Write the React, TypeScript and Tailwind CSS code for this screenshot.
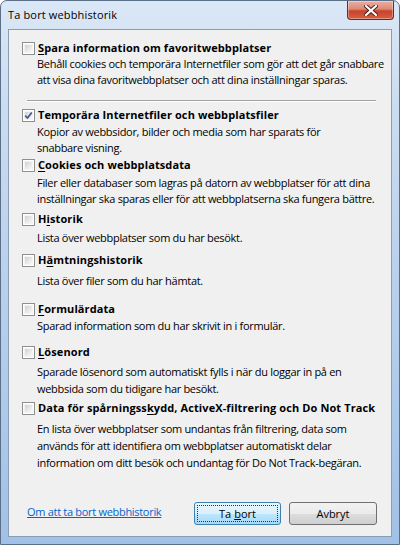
import React from "react";

type Item = {
  label: string;
  ul: number;
  checked?: boolean;
  desc: string[];
  wrap: string;
  descCls: string;
};

const items: Item[] = [
  {
    label: "Spara information om favoritwebbplatser",
    ul: 0,
    desc: [
      "Behåll cookies och temporära Internetfiler som gör att det går snabbare",
      "att visa dina favoritwebbplatser och att dina inställningar sparas.",
    ],
    wrap: "mt-[10px]",
    descCls: "mt-0 leading-[16px]",
  },
  {
    label: "Temporära Internetfiler och webbplatsfiler",
    ul: 3,
    checked: true,
    desc: ["Kopior av webbsidor, bilder och media som har sparats för", "snabbare visning."],
    wrap: "mt-[5px]",
    descCls: "mt-[1px] leading-[16px]",
  },
  {
    label: "Cookies och webbplatsdata",
    ul: 0,
    desc: [
      "Filer eller databaser som lagras på datorn av webbplatser för att dina",
      "inställningar ska sparas eller för att webbplatserna ska fungera bättre.",
    ],
    wrap: "mt-[1px]",
    descCls: "mt-[2px] leading-[16px]",
  },
  {
    label: "Historik",
    ul: 1,
    desc: ["Lista över webbplatser som du har besökt."],
    wrap: "mt-[4px]",
    descCls: "mt-[3px] leading-[16px]",
  },
  {
    label: "Hämtningshistorik",
    ul: 1,
    desc: ["Lista över filer som du har hämtat."],
    wrap: "mt-[6px]",
    descCls: "mt-[5px] leading-[16px]",
  },
  {
    label: "Formulärdata",
    ul: 0,
    desc: ["Sparad information som du har skrivit in i formulär."],
    wrap: "mt-[12px]",
    descCls: "mt-[1px] leading-[16px]",
  },
  {
    label: "Lösenord",
    ul: 0,
    desc: [
      "Sparade lösenord som automatiskt fylls i när du loggar in på en",
      "webbsida som du tidigare har besökt.",
    ],
    wrap: "mt-[10px]",
    descCls: "mt-[3px] leading-[17px]",
  },
  {
    label: "Data för spårningsskydd, ActiveX-filtrering och Do Not Track",
    ul: 19,
    desc: [
      "En lista över webbplatser som undantas från filtrering, data som",
      "används för att identifiera om webbplatser automatiskt delar",
      "information om ditt besök och undantag för Do Not Track-begäran.",
    ],
    wrap: "mt-[3px]",
    descCls: "mt-[4px] leading-[17px]",
  },
];

function Checkbox({ checked }: { checked?: boolean }) {
  return (
    <div className="relative w-[13px] h-[13px] shrink-0 border border-[#8e8f8f] bg-white">
      <div className="absolute inset-[1px] border border-[#f4f4f4] bg-[linear-gradient(135deg,#d2d2d2_0%,#e6e6e6_50%,#f8f8f8_100%)]" />
      {checked && (
        <svg className="absolute left-[1px] top-[1px]" width="9" height="9" viewBox="0 0 9 9">
          <path d="M1.2 4.6 L3.5 7 L7.8 1.4" fill="none" stroke="#3f5a8a" strokeWidth="1.7" />
        </svg>
      )}
    </div>
  );
}

function Label({ text, ul }: { text: string; ul: number }) {
  return (
    <span className="font-bold whitespace-nowrap tracking-[0.1px]">
      {text.slice(0, ul)}
      <span className="underline underline-offset-[2px]">{text.charAt(ul)}</span>
      {text.slice(ul + 1)}
    </span>
  );
}

export default function App() {
  return (
    <div className="w-[400px] h-[545px] flex flex-col overflow-hidden rounded-t-[7px] border border-[#5c6f89] bg-[linear-gradient(180deg,#dae7f6_0%,#cbdcf0_20%,#bad1ec_50%,#abc8ea_80%,#a2c1e6_100%)] font-['Open_Sans',sans-serif] text-[11px] tracking-[-0.3px] text-black">
      <div className="h-[28px] flex items-start justify-between shrink-0">
        <div className="pl-[7px] pt-[6px] text-[11px] tracking-[0.15px] leading-[16px] text-black">Ta bort webbhistorik</div>
        <div className="mr-[5px] w-[47px] h-[19px] rounded-b-[4px] border border-t-0 border-[#6b2a22] bg-[linear-gradient(180deg,#ebb0a2_0%,#dc8877_45%,#c8432c_55%,#d4603f_100%)] flex items-center justify-center shadow-[inset_0_0_0_1px_rgba(255,255,255,0.35)]">
          <svg width="14" height="11" viewBox="0 0 14 11">
            <path d="M2 1 L12 10 M12 1 L2 10" stroke="#4a2018" strokeWidth="4" strokeLinecap="square" />
            <path d="M2 1 L12 10 M12 1 L2 10" stroke="#ffffff" strokeWidth="2.2" strokeLinecap="square" />
          </svg>
        </div>
      </div>
      <div className="mx-[7px] w-[384px] h-[508px] shrink-0 border border-[#8b9db5] bg-[#f0f0f0] flex flex-col">
        <div className="flex flex-col pl-[13px]">
          {items.map((it, i) => (
            <React.Fragment key={i}>
              <div className={it.wrap}>
                <div className="h-[16px] flex items-center gap-[3px]">
                  <Checkbox checked={it.checked} />
                  <Label text={it.label} ul={it.ul} />
                </div>
                <div className={`pl-[15px] ${it.descCls}`}>
                  {it.desc.map((l, j) => (
                    <div key={j} className="whitespace-nowrap">{l}</div>
                  ))}
                </div>
              </div>
              {i === 0 && (
                <div className="mt-[12px] ml-[5px] w-[349px] h-[2px] border-t border-[#a0a0a0] border-b border-b-white" />
              )}
            </React.Fragment>
          ))}
        </div>
        <div className="flex-1" />
        <div className="flex items-center mb-[11px] pl-[18px] pr-[14px]">
          <span className="text-[#0066cc] underline leading-[16px] mb-[3px]">Om att ta bort webbhistorik</span>
          <div className="flex-1" />
          <div className="w-[87px] h-[23px] rounded-[3px] border border-[#3c7fb1] bg-[linear-gradient(180deg,#eaf6fd_0%,#d9f0fc_50%,#bee6fd_51%,#a7d9f5_100%)] p-[2px]">
            <div className="w-full h-full border border-dotted border-[#333] flex items-center justify-center leading-[16px] tracking-normal">
              Ta <span className="underline ml-[3px]">b</span>ort
            </div>
          </div>
          <div className="ml-[8px] w-[88px] h-[23px] rounded-[3px] border border-[#707070] bg-[linear-gradient(180deg,#f2f2f2_0%,#ebebeb_50%,#dddddd_51%,#cfcfcf_100%)] flex items-center justify-center leading-[16px] tracking-normal">
            Avbryt
          </div>
        </div>
      </div>
    </div>
  );
}
